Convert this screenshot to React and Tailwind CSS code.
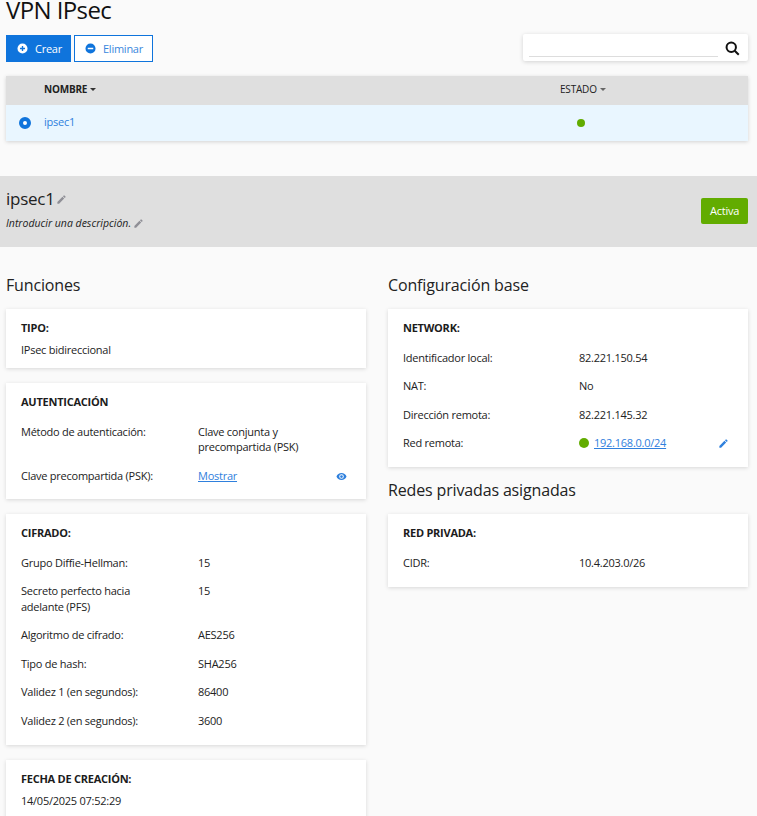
function Edit({ className, fill }) {
  return (
    <svg viewBox="0 0 24 24" className={className} fill={fill}>
      <path d="M3 17.25V21h3.75L17.81 9.94l-3.75-3.75L3 17.25zM20.71 7.04a1 1 0 0 0 0-1.41l-2.34-2.34a1 1 0 0 0-1.41 0l-1.83 1.83 3.75 3.75 1.83-1.83z" />
    </svg>
  );
}

function Caret({ color }) {
  return (
    <svg viewBox="0 0 6 3" className="w-[6px] h-[3px] ml-[3px]" fill={color}>
      <path d="M0 0h6L3 3z" />
    </svg>
  );
}

function Row({ label, children, right, w = "w-[177px]" }) {
  return (
    <div className="flex items-start">
      <div className={`${w} shrink-0 pr-4`}>{label}</div>
      <div className="flex-1 min-w-0">{children}</div>
      {right}
    </div>
  );
}

function Card({ title, children, gap = "gap-[13px]", head = "mb-[14px]", className = "" }) {
  return (
    <div className={`bg-white shadow-[0_1px_4px_rgba(0,0,0,0.14)] px-[15px] ${className}`}>
      <div className={`font-bold text-[#1c1c1c] ${head}`}>{title}</div>
      <div className={`flex flex-col ${gap}`}>{children}</div>
    </div>
  );
}

export default function App() {
  return (
    <div
      className="h-[816px] overflow-hidden bg-[#fafafa] text-[#222222] text-[11px] tracking-[-0.25px] leading-[15.5px]"
      style={{ fontFamily: '"Open Sans", sans-serif' }}
    >
      <div className="px-[6px] pr-[9px]">
        <h1 className="text-[24px] leading-[20px] tracking-[-0.6px] text-[#111111] h-[35px]">VPN IPsec</h1>

        <div className="flex items-start justify-between h-[41px]">
          <div className="flex gap-[3px]">
            <button className="h-[27px] w-[65px] bg-[#0f74dc] text-white flex items-center pl-[11px] gap-[7px]">
              <svg viewBox="0 0 24 24" className="w-[11px] h-[11px]" fill="white">
                <path fillRule="evenodd" d="M12 1a11 11 0 1 0 0 22 11 11 0 0 0 0-22zm1.500 5.500h-3v4h-4v3h4v4h3v-4h4v-3h-4z" />
              </svg>
              Crear
            </button>
            <button className="h-[27px] w-[79px] bg-white border border-[#0f74dc] text-[#3a87dd] flex items-center pl-[10px] gap-[7px]">
              <svg viewBox="0 0 24 24" className="w-[11px] h-[11px]" fill="#0f74dc">
                <path fillRule="evenodd" d="M12 1a11 11 0 1 0 0 22 11 11 0 0 0 0-22zM6 10.250h12v3.500H6z" />
              </svg>
              Eliminar
            </button>
          </div>
          <div className="-mt-px w-[225px] h-[27px] bg-white rounded-[2px] shadow-[0_1px_4px_rgba(0,0,0,0.16)] flex items-start pl-[6px]">
            <div className="w-[189px] h-[23px] border-b border-[#dddddd]"></div>
            <svg viewBox="0 0 24 24" className="w-[15px] h-[15px] ml-[7px] mt-[7px]" fill="none" stroke="#111111" strokeWidth="3.2">
              <circle cx="10" cy="10" r="7.500" />
              <path d="M15.500 15.500 22 22" />
            </svg>
          </div>
        </div>

        <div className="shadow-[0_1px_4px_rgba(0,0,0,0.16)]">
          <div className="h-[29px] pb-[2px] bg-[#dfdfdf] flex items-center text-[10px] tracking-[-0.2px]">
            <div className="w-[38px]"></div>
            <div className="w-[516px] flex items-center font-bold text-[#222222]">
              NOMBRE
              <Caret color="#333333" />
            </div>
            <div className="flex items-center text-[#222222]">
              ESTADO
              <Caret color="#666666" />
            </div>
          </div>
          <div className="h-[36px] bg-[#e9f6ff] flex items-center">
            <div className="w-[38px] pl-[13px]">
              <div className="w-[12px] h-[12px] rounded-full border-[4px] border-[#0f74dc] bg-white"></div>
            </div>
            <div className="w-[533px] text-[#2f80dd] pb-[3px]">ipsec1</div>
            <div className="w-[8px] h-[8px] rounded-full bg-[#62ac00]"></div>
          </div>
        </div>
      </div>

      <div className="mt-[35px] h-[71px] bg-[#dfdfdf] pl-[6px] pr-[9px] pt-[11px] flex items-start justify-between">
        <div>
          <div className="flex items-center text-[17px] tracking-[-0.25px] leading-[24px] text-[#222222]">
            ipsec1
            <Edit className="w-[11px] h-[11px] ml-[1px]" fill="#8f8f96" />
          </div>
          <div className="flex items-center italic text-[10.5px] tracking-normal leading-[16px] mt-[4px] text-[#222222]">
            Introducir una descripción.
            <Edit className="w-[11px] h-[11px] ml-[2px]" fill="#8f8f96" />
          </div>
        </div>
        <div className="mt-[11px] w-[47px] h-[26px] rounded-[2px] bg-[#62ac00] text-white flex items-center justify-center">Activa</div>
      </div>

      <div className="pl-[6px] pr-[9px] pt-[27px] flex justify-between">
        <div className="w-[360px] flex flex-col">
          <h2 className="text-[16px] tracking-[-0.15px] leading-[22px] text-[#222222] mb-[13px]">Funciones</h2>
          <Card title="TIPO:" head="mb-[6px]" className="pt-[11px] h-[59px]">
            <div>IPsec bidireccional</div>
          </Card>
          <Card title="AUTENTICACIÓN" className="mt-[15px] pt-[11px] h-[116px]">
            <Row label="Método de autenticación:">
              Clave conjunta y
              <br />
              precompartida (PSK)
            </Row>
            <Row
              label="Clave precompartida (PSK):"
              right={
                <svg viewBox="0 0 24 24" className="w-[11px] h-[11px] mt-[3px] mr-[4px]" fill="#2f80dd">
                  <path fillRule="evenodd" d="M12 4.500C7 4.500 2.700 7.600 1 12c1.700 4.400 6 7.500 11 7.500s9.300-3.100 11-7.500c-1.700-4.400-6-7.500-11-7.500zM12 17a5 5 0 1 1 0-10 5 5 0 0 1 0 10zm0-8a3 3 0 1 0 0 6 3 3 0 0 0 0-6z" />
                </svg>
              }
            >
              <span className="underline text-[#2f80dd]">Mostrar</span>
            </Row>
          </Card>
          <Card title="CIFRADO:" className="mt-[15px] pt-[11px] h-[231px]">
            <Row label="Grupo Diffie-Hellman:">15</Row>
            <Row label={<>Secreto perfecto hacia<br />adelante (PFS)</>}>15</Row>
            <Row label="Algoritmo de cifrado:">AES256</Row>
            <Row label="Tipo de hash:">SHA256</Row>
            <Row label="Validez 1 (en segundos):">86400</Row>
            <Row label="Validez 2 (en segundos):">3600</Row>
          </Card>
          <Card title="FECHA DE CREACIÓN:" head="mb-[6px]" className="mt-[15px] pt-[11px] h-[70px] shrink-0">
            <div>14/05/2025 07:52:29</div>
          </Card>
        </div>

        <div className="w-[360px]">
          <h2 className="text-[16px] tracking-[-0.15px] leading-[22px] text-[#222222] mb-[13px]">Configuración base</h2>
          <Card title="NETWORK:" className="pt-[11px] h-[158px]">
            <Row w="w-[176px]" label="Identificador local:">82.221.150.54</Row>
            <Row w="w-[176px]" label="NAT:">No</Row>
            <Row w="w-[176px]" label="Dirección remota:">82.221.145.32</Row>
            <Row
              w="w-[176px]"
              label="Red remota:"
              right={<Edit className="w-[11px] h-[11px] mt-[3px] mr-[4px]" fill="#2f80dd" />}
            >
              <div className="flex items-center">
                <span className="w-[10px] h-[10px] rounded-full bg-[#62ac00] mr-[5px]"></span>
                <span className="underline text-[#2f80dd]">192.168.0.0/24</span>
              </div>
            </Row>
          </Card>
          <h2 className="text-[16px] tracking-[-0.15px] leading-[22px] text-[#222222] mt-[12px] mb-[13px]">Redes privadas asignadas</h2>
          <Card title="RED PRIVADA:" className="pt-[11px] h-[73px]">
            <Row w="w-[176px]" label="CIDR:">10.4.203.0/26</Row>
          </Card>
        </div>
      </div>
    </div>
  );
}
